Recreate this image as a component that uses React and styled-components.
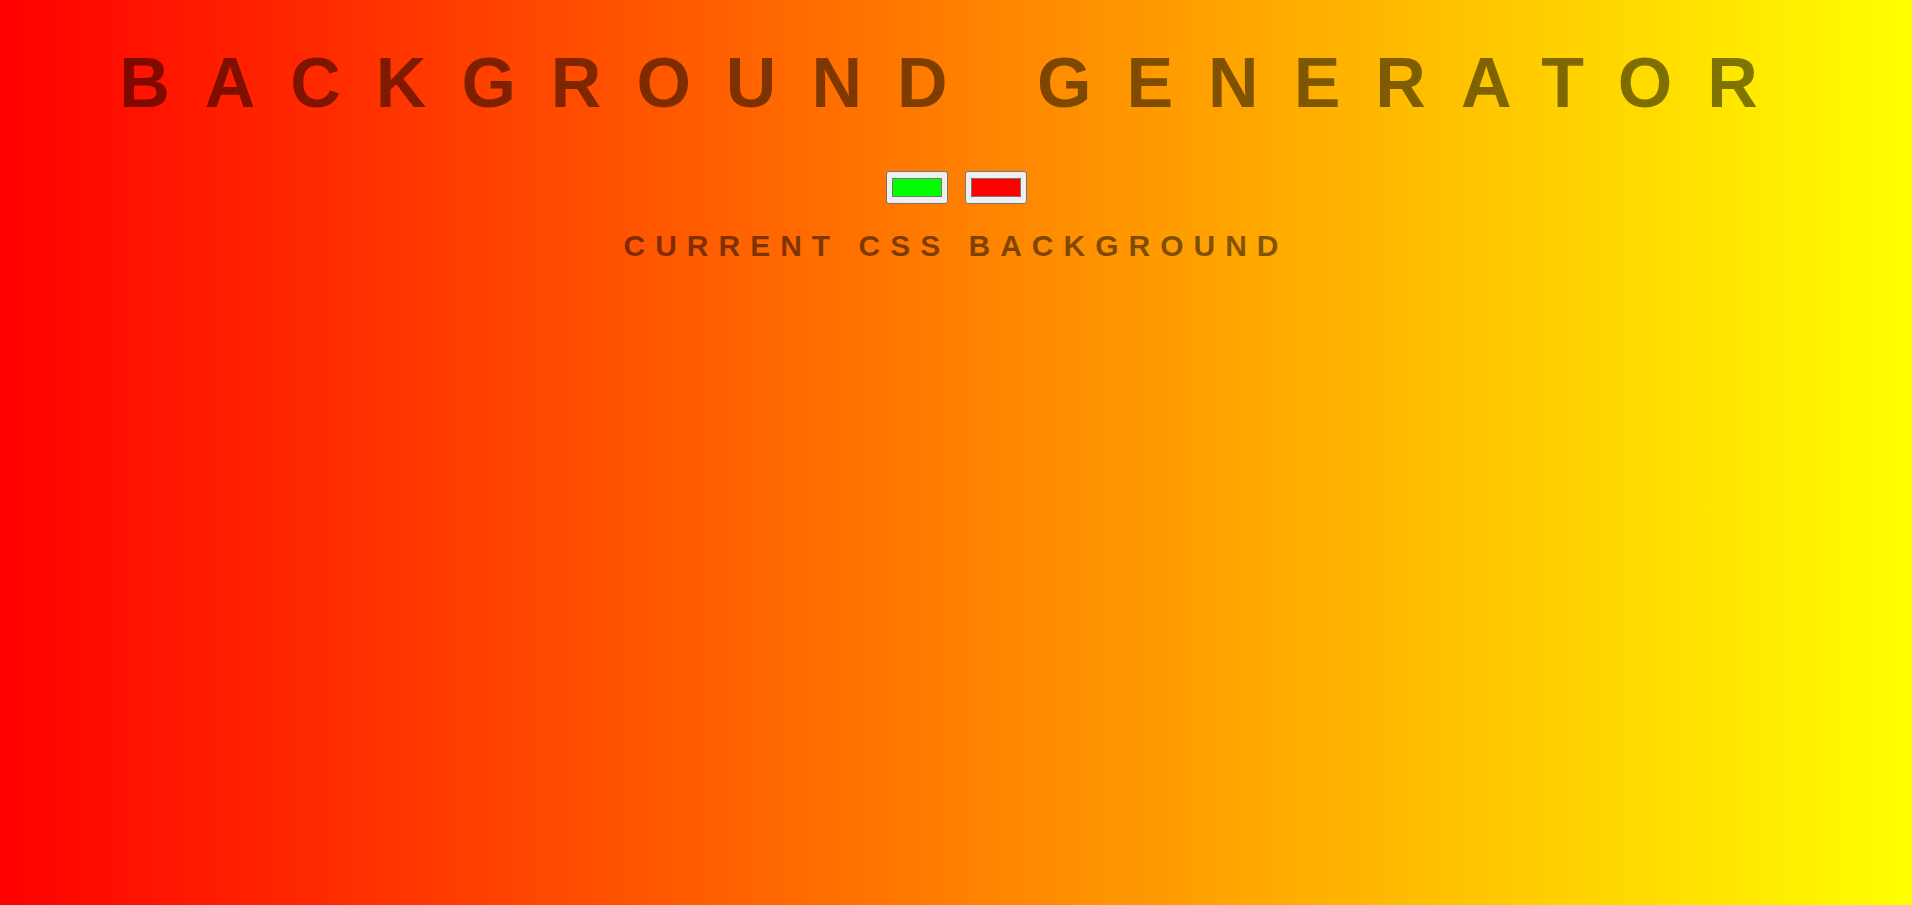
import React, { useState } from "react";
import styled, { createGlobalStyle } from "styled-components";

const GlobalStyle = createGlobalStyle`
  html, body {
    margin: 0;
    padding: 0;
  }
  body {
    font-family: "Liberation Sans", Arial, sans-serif;
  }
`;

const Page = styled.div`
  min-height: 100vh;
  box-sizing: border-box;
  padding: 43px 8px 0;
  text-align: center;
  text-transform: uppercase;
  color: rgba(0, 0, 0, 0.5);
  background: linear-gradient(to right, ${(p) => p.from}, ${(p) => p.to});
`;

const Title = styled.h1`
  margin: 0 0 48px;
  font: 700 70px "Liberation Sans", Arial, sans-serif;
  letter-spacing: 35px;
  color: rgba(0, 0, 0, 0.5);
`;

const Controls = styled.div`
  display: flex;
  justify-content: center;
  gap: 17px;
`;

const ColorInput = styled.input`
  box-sizing: border-box;
  width: 62px;
  height: 33px;
  margin: 0;
  padding: 1px 2px;
  border: 1px solid #767676;
  border-radius: 3px;
  background: #efefef;
  cursor: pointer;

  &::-webkit-color-swatch-wrapper {
    padding: 5px 3px;
  }
  &::-webkit-color-swatch {
    border: 1px solid #777777;
    border-radius: 0;
  }
`;

const Subtitle = styled.h3`
  margin: 25px 0 0;
  font: 700 30px "Liberation Sans", Arial, sans-serif;
  letter-spacing: 10px;
  color: rgba(0, 0, 0, 0.5);
`;

const App = () => {
  const [left, setLeft] = useState("#00ff00");
  const [right, setRight] = useState("#ff0000");

  return (
    <>
      <GlobalStyle />
      <Page from="#ff0000" to="#ffff00">
        <Title>Background Generator</Title>
        <Controls>
          <ColorInput
            type="color"
            name="color1"
            value={left}
            onChange={(e) => setLeft(e.target.value)}
          />
          <ColorInput
            type="color"
            name="color2"
            value={right}
            onChange={(e) => setRight(e.target.value)}
          />
        </Controls>
        <Subtitle>Current CSS Background</Subtitle>
      </Page>
    </>
  );
};

export default App;
